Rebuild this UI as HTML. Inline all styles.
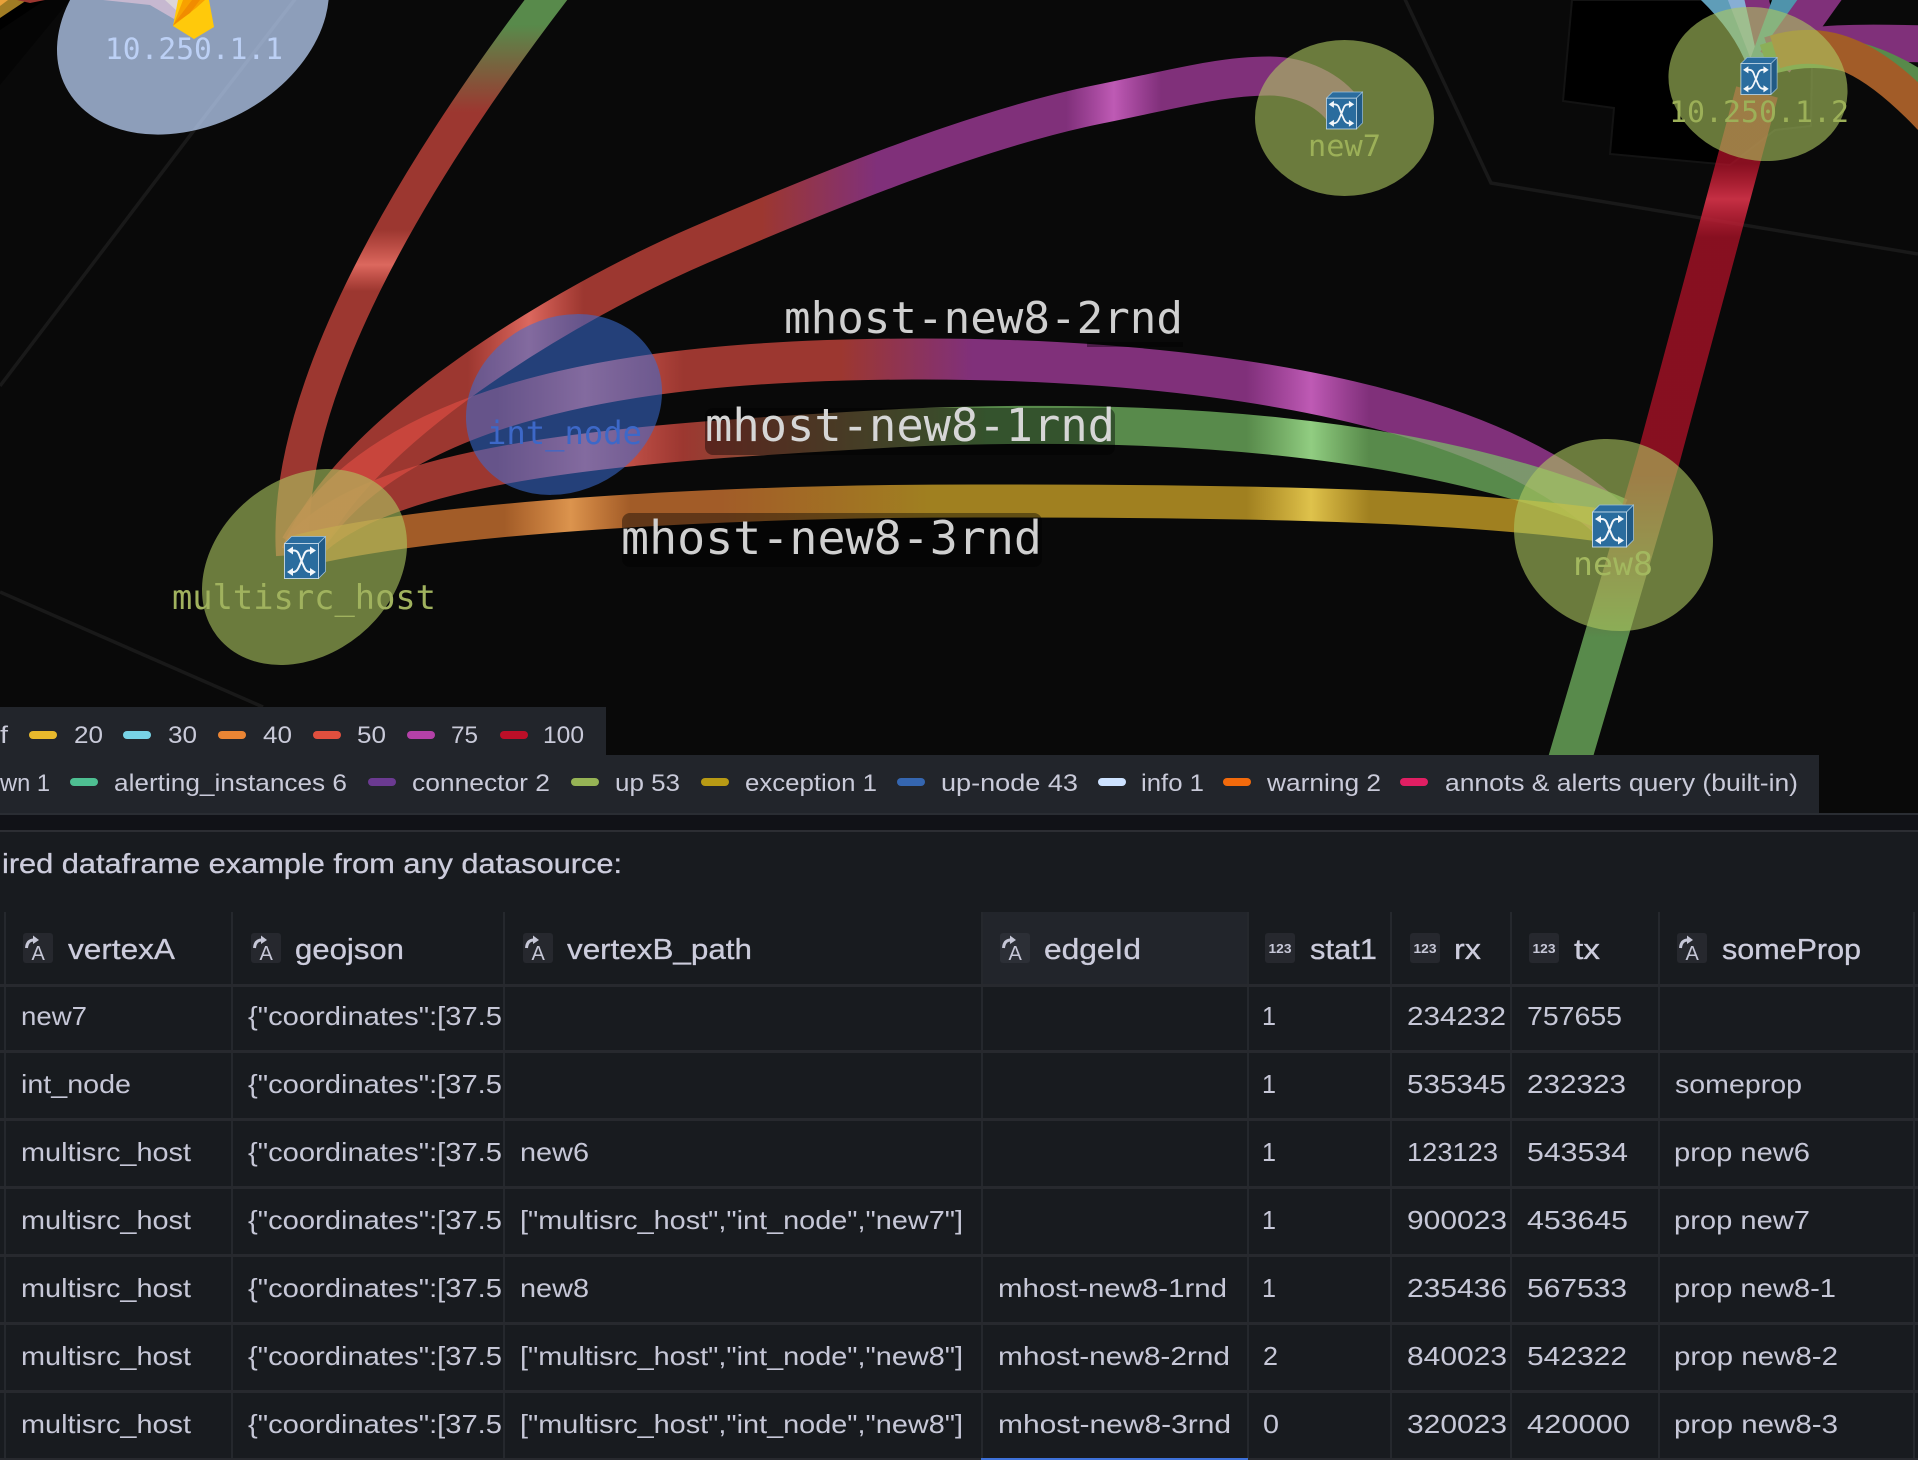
<!DOCTYPE html>
<html lang="en"><head><meta charset="utf-8"><title>Network graph</title>
<style>
html,body{margin:0;padding:0;background:#181b1f;width:1918px;height:1460px;overflow:hidden}
svg{display:block}
.m{font-family:"DejaVu Sans Mono","Liberation Mono",monospace}
.s{font-family:"Liberation Sans",sans-serif}
.c{font-family:"Liberation Sans",sans-serif;font-size:26px;fill:#c6c7d7}
.h{font-family:"Liberation Sans",sans-serif;font-size:29px;fill:#ccccdc;stroke:#ccccdc;stroke-width:.3}
.l{font-family:"Liberation Sans",sans-serif;font-size:24px;fill:#c9cad9}
.ib{fill:#26282e}
.ia{font-family:"Liberation Sans",sans-serif;font-size:20px;fill:#c6c7d7}
.i1{font-family:"Liberation Sans",sans-serif;font-size:13px;font-weight:bold;fill:#c6c7d7}
.ar{fill:none;stroke:#c6c7d7;stroke-width:3}
.at{fill:#c6c7d7}
</style></head><body>
<svg width="1918" height="1460" viewBox="0 0 1918 1460" xmlns="http://www.w3.org/2000/svg">
<defs>
<linearGradient id="gA" gradientUnits="userSpaceOnUse" x1="0" y1="560" x2="0" y2="0">
<stop offset="0" stop-color="#db4b41" stop-opacity=".7"/><stop offset=".48" stop-color="#db4b41" stop-opacity=".7"/>
<stop offset=".527" stop-color="#e06a60" stop-opacity=".98"/><stop offset=".59" stop-color="#db4b41" stop-opacity=".7"/>
<stop offset=".8" stop-color="#db4b41" stop-opacity=".7"/><stop offset=".955" stop-color="#7ac167" stop-opacity=".7"/><stop offset="1" stop-color="#7ac167" stop-opacity=".7"/>
</linearGradient>
<linearGradient id="gB" gradientUnits="userSpaceOnUse" x1="300" y1="0" x2="1350" y2="0">
<stop offset="0" stop-color="#db4b41" stop-opacity=".7"/><stop offset=".16" stop-color="#db4b41" stop-opacity=".7"/>
<stop offset=".218" stop-color="#e06a60" stop-opacity=".98"/><stop offset=".27" stop-color="#db4b41" stop-opacity=".7"/>
<stop offset=".44" stop-color="#db4b41" stop-opacity=".7"/><stop offset=".55" stop-color="#b341ab" stop-opacity=".7"/>
<stop offset=".73" stop-color="#b341ab" stop-opacity=".7"/><stop offset=".775" stop-color="#c25cb8" stop-opacity=".98"/><stop offset=".82" stop-color="#b341ab" stop-opacity=".7"/><stop offset="1" stop-color="#b341ab" stop-opacity=".7"/>
</linearGradient>
<linearGradient id="gC" gradientUnits="userSpaceOnUse" x1="300" y1="0" x2="1620" y2="0">
<stop offset="0" stop-color="#db4b41" stop-opacity=".7"/><stop offset=".15" stop-color="#db4b41" stop-opacity=".7"/>
<stop offset=".216" stop-color="#e06a60" stop-opacity=".98"/><stop offset=".29" stop-color="#db4b41" stop-opacity=".7"/>
<stop offset=".41" stop-color="#db4b41" stop-opacity=".7"/><stop offset=".51" stop-color="#b341ab" stop-opacity=".7"/>
<stop offset=".717" stop-color="#b341ab" stop-opacity=".7"/><stop offset=".766" stop-color="#c25cb8" stop-opacity=".98"/><stop offset=".81" stop-color="#b341ab" stop-opacity=".7"/><stop offset="1" stop-color="#b341ab" stop-opacity=".7"/>
</linearGradient>
<linearGradient id="gD" gradientUnits="userSpaceOnUse" x1="300" y1="0" x2="1620" y2="0">
<stop offset="0" stop-color="#db4b41" stop-opacity=".7"/><stop offset=".15" stop-color="#db4b41" stop-opacity=".7"/>
<stop offset=".216" stop-color="#e06a60" stop-opacity=".98"/><stop offset=".29" stop-color="#db4b41" stop-opacity=".7"/>
<stop offset=".29" stop-color="#db4b41" stop-opacity=".7"/><stop offset=".52" stop-color="#7ac167" stop-opacity=".7"/>
<stop offset=".717" stop-color="#7ac167" stop-opacity=".7"/><stop offset=".766" stop-color="#94d184" stop-opacity=".98"/><stop offset=".81" stop-color="#7ac167" stop-opacity=".7"/><stop offset="1" stop-color="#7ac167" stop-opacity=".7"/>
</linearGradient>
<linearGradient id="gE" gradientUnits="userSpaceOnUse" x1="300" y1="0" x2="1620" y2="0">
<stop offset="0" stop-color="#e48035" stop-opacity=".7"/><stop offset=".155" stop-color="#e48035" stop-opacity=".7"/>
<stop offset=".205" stop-color="#e0974f" stop-opacity=".98"/><stop offset=".25" stop-color="#e48035" stop-opacity=".7"/>
<stop offset=".32" stop-color="#e48035" stop-opacity=".7"/><stop offset=".48" stop-color="#e1b32a" stop-opacity=".7"/>
<stop offset=".717" stop-color="#e1b32a" stop-opacity=".7"/><stop offset=".766" stop-color="#e3c64d" stop-opacity=".98"/><stop offset=".81" stop-color="#e1b32a" stop-opacity=".7"/><stop offset="1" stop-color="#e1b32a" stop-opacity=".7"/>
</linearGradient>
<linearGradient id="gF" gradientUnits="userSpaceOnUse" x1="0" y1="60" x2="0" y2="800">
<stop offset="0" stop-color="#bd122a" stop-opacity=".7"/><stop offset=".14" stop-color="#bd122a" stop-opacity=".7"/>
<stop offset=".188" stop-color="#c93045" stop-opacity=".98"/><stop offset=".24" stop-color="#bd122a" stop-opacity=".7"/>
<stop offset=".56" stop-color="#bd122a" stop-opacity=".7"/><stop offset=".78" stop-color="#7ac167" stop-opacity=".7"/><stop offset="1" stop-color="#7ac167" stop-opacity=".7"/>
</linearGradient>
<symbol id="sw" viewBox="0 0 42 43">
<polygon points="0.5,7.5 7.5,0.5 41.5,0.5 34.5,7.5" fill="#2a6c9e" stroke="#9dc0d8" stroke-width=".8"/>
<polygon points="34.5,7.5 41.5,0.5 41.5,35.5 34.5,42.5" fill="#215a85" stroke="#9dc0d8" stroke-width=".8"/>
<rect x="0.5" y="7.5" width="34" height="35" fill="#2a6c9e" stroke="#c7dbe8" stroke-width=".9"/>
<path d="M6 14.500H10C15 14.500 15 20 17.500 25C20 30 21 36 26 36H30M29 14.500H25C20 14.500 20 20 17.500 25C15 30 14 36 9 36H5" fill="none" stroke="#f2f6fa" stroke-width="2"/>
<path d="M3 14.500L9 10.500V18.500ZM32 14.500L26 10.500V18.500ZM3 36L9 32V40ZM32 36L26 32V40Z" fill="#f2f6fa"/>
</symbol>
</defs>

<!-- map -->
<rect x="0" y="0" width="1918" height="813" fill="#090909"/>
<polygon points="1572,0 1563,101 1614,108 1610,154 1730,165 1775,130 1811,126 1813,0" fill="#000" stroke="#131313" stroke-width="2"/>
<polygon points="0,0 70,0 0,45" fill="#000"/>
<polygon points="70,0 0,85 0,30 45,0" fill="#050505"/>
<path d="M1403 -5L1491 183L1918 254" fill="none" stroke="#191919" stroke-width="3.500"/>
<path d="M296 -2L192 133L0 386" fill="none" stroke="#191919" stroke-width="3.500"/>
<path d="M0 592L263 707" fill="none" stroke="#191919" stroke-width="3.500"/>

<!-- top left edge stubs -->
<polygon points="0,18 27,0 0,0" fill="#a07c24"/>
<polygon points="0,6 8,0 0,0" fill="#e8a13a"/>
<polygon points="17,0 45,0 30,3" fill="#9c3730"/>

<!-- edges -->
<path d="M293 555C283 400 400 190 555 -12" fill="none" stroke="url(#gA)" stroke-width="34"/>
<path d="M300 555C350 430 570 301 700 245C830 189 980 128 1100 104C1170 90 1220 76 1269 76C1300 76 1330 90 1345 112" fill="none" stroke="url(#gB)" stroke-width="39"/>
<path d="M300 548C400 380 700 360 912 359C1150 358 1470 390 1610 520" fill="none" stroke="url(#gC)" stroke-width="41"/>
<path d="M300 550C380 457 650 442 900 428C1150 417 1420 432 1620 517" fill="none" stroke="url(#gD)" stroke-width="38"/>
<path d="M295 552C420 520 700 500 1000 501C1250 501 1450 505 1600 525" fill="none" stroke="url(#gE)" stroke-width="33"/>
<path d="M1555 810L1658 460L1757 92" fill="none" stroke="url(#gF)" stroke-width="43"/>

<!-- edges around 10.250.1.2 -->
<path d="M1708 -12C1733 12 1750 35 1760 62" fill="none" stroke="#5f9db8" stroke-width="27"/>
<path d="M1735 -8L1762 62" fill="none" stroke="#87aed4" stroke-width="19"/>
<path d="M1755 -8L1768 50" fill="none" stroke="#80307a" stroke-width="24"/>
<path d="M1790 -8L1764 62" fill="none" stroke="#4f93ab" stroke-width="28"/>
<path d="M1828 -12L1775 62" fill="none" stroke="#80307a" stroke-width="36"/>
<path d="M1770 55C1810 42 1860 42 1925 44" fill="none" stroke="#80307a" stroke-width="37"/>
<path d="M1765 60C1830 38 1890 65 1930 95" fill="none" stroke="#588a4b" stroke-width="32"/>
<path d="M1775 52C1830 35 1875 60 1930 118" fill="none" stroke="#a25c28" stroke-width="34"/>

<!-- 2rnd label shadow fragment -->
<rect x="1087" y="342" width="96" height="5" fill="#000" fill-opacity=".4"/>

<!-- nodes -->
<ellipse cx="193" cy="20.600" rx="143.500" ry="104.400" transform="rotate(-27.700 193 20.600)" fill="rgb(192,216,255)" fill-opacity=".72"/>
<polygon points="103,0 150,5 174,19 185,0" fill="#c6b8d0"/>
<polygon points="165,0 178,12 186,0" fill="#dcd6d8"/>
<ellipse cx="304.500" cy="567" rx="111.500" ry="87.600" transform="rotate(-39.500 304.500 567)" fill="rgb(174,200,97)" fill-opacity=".6"/>
<ellipse cx="564" cy="404.500" rx="101.600" ry="86.400" transform="rotate(-30 564 404.500)" fill="rgb(58,109,214)" fill-opacity=".55"/>
<ellipse cx="1344.500" cy="118" rx="89.500" ry="78" fill="rgb(174,200,97)" fill-opacity=".6"/>
<ellipse cx="1613.500" cy="535" rx="101.200" ry="94.200" transform="rotate(30 1613.500 535)" fill="rgb(174,200,97)" fill-opacity=".6"/>
<ellipse cx="1758" cy="84" rx="90.500" ry="75.900" transform="rotate(15.500 1758 84)" fill="rgb(174,200,97)" fill-opacity=".6"/>

<!-- flame icon -->
<polygon points="173,26 178,0 209,0 214,27 194,39" fill="#ffc90b"/>
<polygon points="173,26 183,0 205,0 196,8" fill="#f8a100"/>
<polygon points="173,25 192,0 200,0 190,13" fill="#f18c00"/>

<!-- switch icons -->
<use href="#sw" x="1326" y="91" width="37" height="39"/>
<use href="#sw" x="1740" y="57" width="38" height="38"/>
<use href="#sw" x="1592" y="504" width="42" height="44"/>
<use href="#sw" x="284" y="536" width="42" height="43"/>

<!-- node labels -->
<text class="m" x="105" y="59" font-size="29" fill="#bcd0f5" textLength="178" lengthAdjust="spacingAndGlyphs">10.250.1.1</text>
<text class="m" x="172" y="609" font-size="33.500" fill="#a0b25e" textLength="264" lengthAdjust="spacingAndGlyphs">multisrc_host</text>
<text class="m" x="487" y="444" font-size="32" fill="#3d68c8" textLength="155" lengthAdjust="spacingAndGlyphs">int_node</text>
<text class="m" x="1308" y="156" font-size="29" fill="#9cb058" textLength="73" lengthAdjust="spacingAndGlyphs">new7</text>
<text class="m" x="1573" y="575" font-size="32" fill="#a3b85f" textLength="80" lengthAdjust="spacingAndGlyphs">new8</text>
<text class="m" x="1669" y="122" font-size="29" fill="#9cb058" textLength="180" lengthAdjust="spacingAndGlyphs">10.250.1.2</text>

<!-- edge labels -->
<rect x="705" y="408" width="410" height="47" rx="8" fill="#000" fill-opacity=".4"/>
<rect x="622" y="513" width="420" height="54" rx="8" fill="#000" fill-opacity=".4"/>
<text class="m" x="784" y="333" font-size="44" fill="#cfcfcf" textLength="399" lengthAdjust="spacingAndGlyphs">mhost-new8-2rnd</text>
<text class="m" x="705" y="441" font-size="45" fill="#d6d6d6" textLength="410" lengthAdjust="spacingAndGlyphs">mhost-new8-1rnd</text>
<text class="m" x="621" y="554" font-size="46" fill="#d0d0d0" textLength="421" lengthAdjust="spacingAndGlyphs">mhost-new8-3rnd</text>

<!-- legends -->
<rect x="0" y="707" width="606" height="48" fill="#22252b"/>
<rect x="0" y="755" width="1819" height="58" fill="#22252b"/>
<text class="l" x="0" y="743" textLength="8" lengthAdjust="spacingAndGlyphs">f</text>
<rect x="29" y="731" width="28" height="8" rx="4" fill="#e8b92c"/>
<text class="l" x="74" y="743" textLength="29" lengthAdjust="spacingAndGlyphs">20</text>
<rect x="123" y="731" width="28" height="8" rx="4" fill="#78d3e6"/>
<text class="l" x="168" y="743" textLength="29" lengthAdjust="spacingAndGlyphs">30</text>
<rect x="218" y="731" width="28" height="8" rx="4" fill="#ea8534"/>
<text class="l" x="263" y="743" textLength="29" lengthAdjust="spacingAndGlyphs">40</text>
<rect x="313" y="731" width="28" height="8" rx="4" fill="#e04f3e"/>
<text class="l" x="357" y="743" textLength="29" lengthAdjust="spacingAndGlyphs">50</text>
<rect x="407" y="731" width="28" height="8" rx="4" fill="#b441a8"/>
<text class="l" x="451" y="743" textLength="27" lengthAdjust="spacingAndGlyphs">75</text>
<rect x="500" y="731" width="28" height="8" rx="4" fill="#bd0f28"/>
<text class="l" x="543" y="743" textLength="41" lengthAdjust="spacingAndGlyphs">100</text>

<text class="l" x="0" y="791" textLength="50" lengthAdjust="spacingAndGlyphs">wn 1</text>
<rect x="70" y="778" width="28" height="8" rx="4" fill="#4ebf92"/>
<text class="l" x="114" y="791" textLength="233" lengthAdjust="spacingAndGlyphs">alerting_instances 6</text>
<rect x="368" y="778" width="28" height="8" rx="4" fill="#6b3a91"/>
<text class="l" x="412" y="791" textLength="138" lengthAdjust="spacingAndGlyphs">connector 2</text>
<rect x="571" y="778" width="28" height="8" rx="4" fill="#96b355"/>
<text class="l" x="615" y="791" textLength="65" lengthAdjust="spacingAndGlyphs">up 53</text>
<rect x="701" y="778" width="28" height="8" rx="4" fill="#b89a14"/>
<text class="l" x="745" y="791" textLength="132" lengthAdjust="spacingAndGlyphs">exception 1</text>
<rect x="897" y="778" width="28" height="8" rx="4" fill="#3566b0"/>
<text class="l" x="941" y="791" textLength="137" lengthAdjust="spacingAndGlyphs">up-node 43</text>
<rect x="1098" y="778" width="28" height="8" rx="4" fill="#cde2ff"/>
<text class="l" x="1141" y="791" textLength="63" lengthAdjust="spacingAndGlyphs">info 1</text>
<rect x="1223" y="778" width="28" height="8" rx="4" fill="#f26a0c"/>
<text class="l" x="1267" y="791" textLength="114" lengthAdjust="spacingAndGlyphs">warning 2</text>
<rect x="1400" y="778" width="28" height="8" rx="4" fill="#e01f63"/>
<text class="l" x="1445" y="791" textLength="353" lengthAdjust="spacingAndGlyphs">annots &amp; alerts query (built-in)</text>

<!-- gap & panel -->
<rect x="0" y="813" width="1918" height="2" fill="#2a2d33"/>
<rect x="0" y="815" width="1918" height="15" fill="#111217"/>
<rect x="0" y="830" width="1918" height="2" fill="#2c2e33"/>
<rect x="0" y="832" width="1918" height="628" fill="#181b1f"/>
<text class="s" x="2" y="873" font-size="28" fill="#ccccdc" textLength="620" lengthAdjust="spacingAndGlyphs" stroke="#ccccdc" stroke-width=".3">ired dataframe example from any datasource:</text>

<!-- table -->
<rect x="982" y="912" width="265" height="72" fill="#22252b"/>
<g fill="#25282d">
<rect x="4" y="912" width="2" height="548"/><rect x="231" y="912" width="2" height="548"/><rect x="503" y="912" width="2" height="548"/><rect x="981" y="912" width="2" height="548"/><rect x="1247" y="912" width="2" height="548"/><rect x="1390" y="912" width="2" height="548"/><rect x="1510" y="912" width="2" height="548"/><rect x="1658" y="912" width="2" height="548"/><rect x="1913" y="912" width="2" height="548"/>
</g>
<g fill="#27292e">
<rect x="0" y="984" width="1918" height="3"/><rect x="0" y="1050" width="1918" height="3"/><rect x="0" y="1118" width="1918" height="3"/><rect x="0" y="1186" width="1918" height="3"/><rect x="0" y="1254" width="1918" height="3"/><rect x="0" y="1322" width="1918" height="3"/><rect x="0" y="1390" width="1918" height="3"/><rect x="0" y="1458" width="1918" height="2"/>
</g>
<rect x="981" y="1458" width="267" height="2" fill="#3d71d9"/>

<!-- header icons: string -->
<g transform="translate(23 933)"><rect class="ib" width="30" height="30" rx="3"/><path class="ar" d="M3.500 15C4 9 7 7 11 7"/><polygon class="at" points="10,2.500 16,7 10,11"/><text class="ia" x="8.500" y="27">A</text></g>
<g transform="translate(251 933)"><rect class="ib" width="30" height="30" rx="3"/><path class="ar" d="M3.500 15C4 9 7 7 11 7"/><polygon class="at" points="10,2.500 16,7 10,11"/><text class="ia" x="8.500" y="27">A</text></g>
<g transform="translate(523 933)"><rect class="ib" width="30" height="30" rx="3"/><path class="ar" d="M3.500 15C4 9 7 7 11 7"/><polygon class="at" points="10,2.500 16,7 10,11"/><text class="ia" x="8.500" y="27">A</text></g>
<g transform="translate(1000 933)"><rect x="0" width="30" height="30" rx="3" fill="#2c2f36"/><path class="ar" d="M3.500 15C4 9 7 7 11 7"/><polygon class="at" points="10,2.500 16,7 10,11"/><text class="ia" x="8.500" y="27">A</text></g>
<g transform="translate(1677 933)"><rect class="ib" width="30" height="30" rx="3"/><path class="ar" d="M3.500 15C4 9 7 7 11 7"/><polygon class="at" points="10,2.500 16,7 10,11"/><text class="ia" x="8.500" y="27">A</text></g>
<!-- header icons: number -->
<g transform="translate(1265 933)"><rect class="ib" width="30" height="30" rx="3"/><text class="i1" x="3.500" y="20" textLength="23" lengthAdjust="spacingAndGlyphs">123</text></g>
<g transform="translate(1410 933)"><rect class="ib" width="30" height="30" rx="3"/><text class="i1" x="3.500" y="20" textLength="23" lengthAdjust="spacingAndGlyphs">123</text></g>
<g transform="translate(1529 933)"><rect class="ib" width="30" height="30" rx="3"/><text class="i1" x="3.500" y="20" textLength="23" lengthAdjust="spacingAndGlyphs">123</text></g>

<!-- header text -->
<text class="h" x="68" y="959" textLength="107" lengthAdjust="spacingAndGlyphs">vertexA</text>
<text class="h" x="295" y="959" textLength="109" lengthAdjust="spacingAndGlyphs">geojson</text>
<text class="h" x="567" y="959" textLength="185" lengthAdjust="spacingAndGlyphs">vertexB_path</text>
<text class="h" x="1044" y="959" textLength="97" lengthAdjust="spacingAndGlyphs">edgeId</text>
<text class="h" x="1310" y="959" textLength="67" lengthAdjust="spacingAndGlyphs">stat1</text>
<text class="h" x="1454" y="959" textLength="27" lengthAdjust="spacingAndGlyphs">rx</text>
<text class="h" x="1574" y="959" textLength="26" lengthAdjust="spacingAndGlyphs">tx</text>
<text class="h" x="1722" y="959" textLength="139" lengthAdjust="spacingAndGlyphs">someProp</text>

<!-- rows -->
<text class="c" x="21" y="1025" textLength="66" lengthAdjust="spacingAndGlyphs">new7</text>
<text class="c" x="248" y="1025" textLength="254" lengthAdjust="spacingAndGlyphs">{"coordinates":[37.5</text>
<text class="c" x="1262" y="1025" textLength="14" lengthAdjust="spacingAndGlyphs">1</text>
<text class="c" x="1407" y="1025" textLength="99" lengthAdjust="spacingAndGlyphs">234232</text>
<text class="c" x="1527" y="1025" textLength="95" lengthAdjust="spacingAndGlyphs">757655</text>

<text class="c" x="21" y="1093" textLength="110" lengthAdjust="spacingAndGlyphs">int_node</text>
<text class="c" x="248" y="1093" textLength="254" lengthAdjust="spacingAndGlyphs">{"coordinates":[37.5</text>
<text class="c" x="1262" y="1093" textLength="14" lengthAdjust="spacingAndGlyphs">1</text>
<text class="c" x="1407" y="1093" textLength="99" lengthAdjust="spacingAndGlyphs">535345</text>
<text class="c" x="1527" y="1093" textLength="99" lengthAdjust="spacingAndGlyphs">232323</text>
<text class="c" x="1675" y="1093" textLength="127" lengthAdjust="spacingAndGlyphs">someprop</text>

<text class="c" x="21" y="1161" textLength="170" lengthAdjust="spacingAndGlyphs">multisrc_host</text>
<text class="c" x="248" y="1161" textLength="254" lengthAdjust="spacingAndGlyphs">{"coordinates":[37.5</text>
<text class="c" x="520" y="1161" textLength="69" lengthAdjust="spacingAndGlyphs">new6</text>
<text class="c" x="1262" y="1161" textLength="14" lengthAdjust="spacingAndGlyphs">1</text>
<text class="c" x="1407" y="1161" textLength="91" lengthAdjust="spacingAndGlyphs">123123</text>
<text class="c" x="1527" y="1161" textLength="101" lengthAdjust="spacingAndGlyphs">543534</text>
<text class="c" x="1674" y="1161" textLength="136" lengthAdjust="spacingAndGlyphs">prop new6</text>

<text class="c" x="21" y="1229" textLength="170" lengthAdjust="spacingAndGlyphs">multisrc_host</text>
<text class="c" x="248" y="1229" textLength="254" lengthAdjust="spacingAndGlyphs">{"coordinates":[37.5</text>
<text class="c" x="520" y="1229" textLength="443" lengthAdjust="spacingAndGlyphs">["multisrc_host","int_node","new7"]</text>
<text class="c" x="1262" y="1229" textLength="14" lengthAdjust="spacingAndGlyphs">1</text>
<text class="c" x="1407" y="1229" textLength="100" lengthAdjust="spacingAndGlyphs">900023</text>
<text class="c" x="1527" y="1229" textLength="101" lengthAdjust="spacingAndGlyphs">453645</text>
<text class="c" x="1674" y="1229" textLength="136" lengthAdjust="spacingAndGlyphs">prop new7</text>

<text class="c" x="21" y="1297" textLength="170" lengthAdjust="spacingAndGlyphs">multisrc_host</text>
<text class="c" x="248" y="1297" textLength="254" lengthAdjust="spacingAndGlyphs">{"coordinates":[37.5</text>
<text class="c" x="520" y="1297" textLength="69" lengthAdjust="spacingAndGlyphs">new8</text>
<text class="c" x="998" y="1297" textLength="229" lengthAdjust="spacingAndGlyphs">mhost-new8-1rnd</text>
<text class="c" x="1262" y="1297" textLength="14" lengthAdjust="spacingAndGlyphs">1</text>
<text class="c" x="1407" y="1297" textLength="100" lengthAdjust="spacingAndGlyphs">235436</text>
<text class="c" x="1527" y="1297" textLength="100" lengthAdjust="spacingAndGlyphs">567533</text>
<text class="c" x="1674" y="1297" textLength="162" lengthAdjust="spacingAndGlyphs">prop new8-1</text>

<text class="c" x="21" y="1365" textLength="170" lengthAdjust="spacingAndGlyphs">multisrc_host</text>
<text class="c" x="248" y="1365" textLength="254" lengthAdjust="spacingAndGlyphs">{"coordinates":[37.5</text>
<text class="c" x="520" y="1365" textLength="443" lengthAdjust="spacingAndGlyphs">["multisrc_host","int_node","new8"]</text>
<text class="c" x="998" y="1365" textLength="232" lengthAdjust="spacingAndGlyphs">mhost-new8-2rnd</text>
<text class="c" x="1263" y="1365" textLength="15" lengthAdjust="spacingAndGlyphs">2</text>
<text class="c" x="1407" y="1365" textLength="100" lengthAdjust="spacingAndGlyphs">840023</text>
<text class="c" x="1527" y="1365" textLength="100" lengthAdjust="spacingAndGlyphs">542322</text>
<text class="c" x="1674" y="1365" textLength="164" lengthAdjust="spacingAndGlyphs">prop new8-2</text>

<text class="c" x="21" y="1433" textLength="170" lengthAdjust="spacingAndGlyphs">multisrc_host</text>
<text class="c" x="248" y="1433" textLength="254" lengthAdjust="spacingAndGlyphs">{"coordinates":[37.5</text>
<text class="c" x="520" y="1433" textLength="443" lengthAdjust="spacingAndGlyphs">["multisrc_host","int_node","new8"]</text>
<text class="c" x="998" y="1433" textLength="233" lengthAdjust="spacingAndGlyphs">mhost-new8-3rnd</text>
<text class="c" x="1263" y="1433" textLength="16" lengthAdjust="spacingAndGlyphs">0</text>
<text class="c" x="1407" y="1433" textLength="100" lengthAdjust="spacingAndGlyphs">320023</text>
<text class="c" x="1527" y="1433" textLength="103" lengthAdjust="spacingAndGlyphs">420000</text>
<text class="c" x="1674" y="1433" textLength="164" lengthAdjust="spacingAndGlyphs">prop new8-3</text>
</svg>
</body></html>
